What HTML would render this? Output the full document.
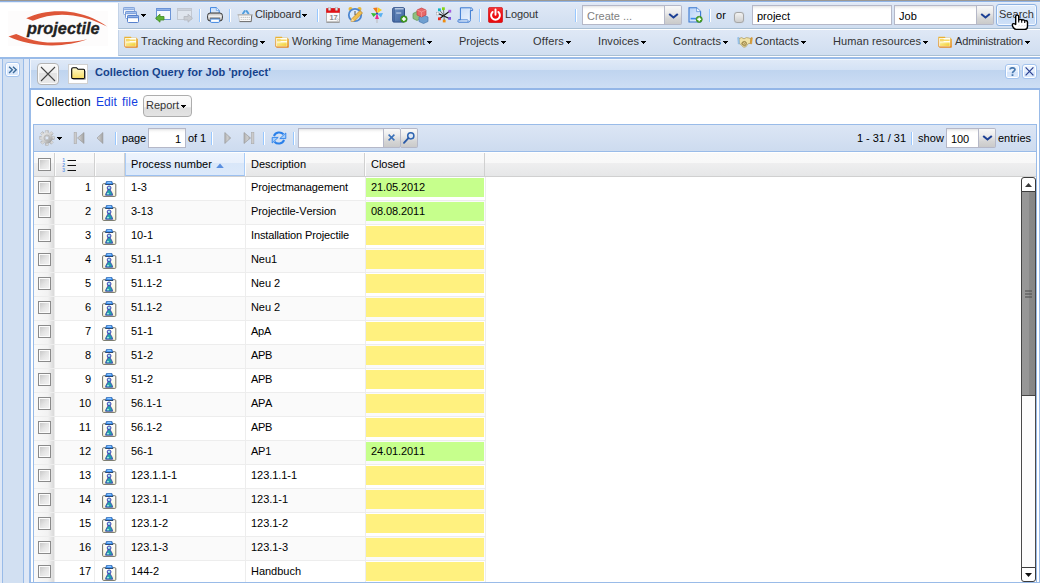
<!DOCTYPE html>
<html><head><meta charset="utf-8">
<style>
*{box-sizing:border-box;margin:0;padding:0}
html,body{width:1040px;height:583px;overflow:hidden;background:#fff}
body{font-kerning:none;font-family:"Liberation Sans",sans-serif;font-size:11px;color:#000;position:relative}
.a{position:absolute}
.t{position:absolute;white-space:nowrap;line-height:14px;height:14px}
.m{color:#333}
.tb{position:absolute;left:118px;width:922px;height:26px;background:linear-gradient(#dfe8f6,#d0def0);border-left:1px solid #c3d3e8;border-bottom:1px solid #a9bfd3}
.sep{position:absolute;width:2px;height:13px;border-left:1px solid #98c8ff;border-right:1px solid #fff;top:9px}
.arr{position:absolute;width:5px;height:1px;background:#000}.arr::before{content:"";position:absolute;left:1px;top:1px;width:3px;height:1px;background:#000}.arr::after{content:"";position:absolute;left:2px;top:2px;width:1px;height:1px;background:#000}
.inp{position:absolute;background:linear-gradient(#e4e4e4 0,#f8f8f8 2px,#fff 4px);border:1px solid #b5b8c8;height:20px}
.trg{position:absolute;width:17px;height:20px;border:1px solid #b5b8c8;border-left:none;border-radius:0 2px 2px 0;background:linear-gradient(#f8f8f8 0%,#ececec 35%,#d4d4d4 70%,#cacaca 100%)}
</style></head><body>
<!-- top chrome -->
<div class="a" style="left:0;top:0;width:1040px;height:1px;background:#9b9893"></div>
<div class="a" style="left:0;top:1px;width:1040px;height:1px;background:#8fb3e6"></div><div class="a" style="left:0;top:2px;width:1040px;height:1px;background:#e4edf9"></div>
<!-- toolbars -->
<div class="tb" id="tb1" style="top:3px"></div>
<div class="tb" id="tb2" style="top:30px"></div>
<div class="a" style="left:0;top:57px;width:1040px;height:2px;background:#99bbe8"></div>

<!-- logo -->
<div class="a" style="left:8px;top:11px;width:100px;height:35px;background:#fdfcfc"></div>
<svg class="a" style="left:0;top:0" width="118" height="57" viewBox="0 0 118 57">
<path d="M26.2 18.2 C40 11.5 58 9.5 74 12.6 C88 15.4 99 20.5 107 26.6 C97 21.5 86 17.6 73 15.6 C59 13.4 45 15.6 32.8 20.7 Z" fill="#de5638"/>
<path d="M16.2 33.9 C27 39 40 42.5 52 42.6 C65 42.7 77 41.5 87.6 39.3 C77 43 64 45.6 51 45.4 C36 45.2 20 42 8.5 36.5 Z" fill="#de5638"/>
</svg>
<div class="t" style="left:27px;top:18.5px;height:20px;line-height:20px;font-size:16px;font-weight:bold;font-style:italic;color:#222;-webkit-text-stroke:0.3px #222;transform:scaleX(1.02);transform-origin:0 0" id="logotxt">projectile</div>

<!-- toolbar row 1 items -->
<div id="r1">
<!-- windows stack -->
<svg class="a" style="left:123px;top:7px" width="17" height="17" viewBox="0 0 17 17">
<rect x="0.5" y="0.5" width="11" height="7" rx="1" fill="#fff" stroke="#86a6dc"/><rect x="0.5" y="0.5" width="11" height="2.2" rx="1" fill="#b0caf0" stroke="#86a6dc"/>
<rect x="2.5" y="4.5" width="11" height="7" rx="1" fill="#fff" stroke="#7498d6"/><rect x="2.5" y="4.5" width="11" height="2.2" rx="1" fill="#a2c0ee" stroke="#7498d6"/>
<rect x="4.5" y="8.5" width="11" height="7" rx="1" fill="#fff" stroke="#5680cc"/><rect x="4.5" y="8.5" width="11" height="2.2" rx="1" fill="#92b4ea" stroke="#5680cc"/>
</svg>
<div class="arr" style="left:141px;top:14px"></div>
<!-- back -->
<svg class="a" style="left:155px;top:7px" width="17" height="17" viewBox="0 0 17 17">
<rect x="1.5" y="1.5" width="14" height="11" fill="#f4f8fe" stroke="#6b93d6"/><rect x="1.5" y="1.5" width="14" height="2" fill="#8fb2ea" stroke="#6b93d6"/>
<path d="M0.5 11.2 L5 7.2 V9.5 H9 V13 H5 V15.2 Z" fill="#5fb336" stroke="#3f8a22" stroke-width="0.8"/>
</svg>
<!-- forward disabled -->
<svg class="a" style="left:176px;top:7px" width="17" height="17" viewBox="0 0 17 17">
<rect x="1.5" y="1.5" width="14" height="11" fill="#dfe5ee" stroke="#c2c8d2"/><rect x="1.5" y="1.5" width="14" height="2" fill="#ccd2dc" stroke="#c2c8d2"/>
<path d="M16.5 11.2 L12 7.2 V9.5 H8 V13 H12 V15.2 Z" fill="#c9ccd2" stroke="#b4b8bf" stroke-width="0.8"/>
</svg>
<div class="sep" style="left:199px"></div>
<!-- printer -->
<svg class="a" style="left:207px;top:7px" width="16" height="16" viewBox="0 0 16 16">
<defs><linearGradient id="prb" x1="0" y1="0" x2="0" y2="1"><stop offset="0" stop-color="#b8b8b8"/><stop offset="0.45" stop-color="#f2f2f2"/><stop offset="1" stop-color="#8c8c8c"/></linearGradient></defs>
<path d="M3.5 0.6 H9.3 L12.2 3.4 V8 H3.5 Z" fill="#d4e5fb" stroke="#3f86e0" stroke-width="1"/>
<path d="M9.3 0.6 V3.4 H12.2" fill="#f4f9ff" stroke="#3f86e0" stroke-width="0.6"/>
<rect x="0.6" y="6" width="14.8" height="8" rx="2.6" fill="url(#prb)" stroke="#3a3a3a" stroke-width="1"/>
<rect x="3" y="10.6" width="10" height="1.2" fill="#666"/>
<rect x="3.6" y="12" width="8.8" height="3.4" rx="0.8" fill="#fff" stroke="#3f86e0" stroke-width="1"/>
</svg>
<div class="sep" style="left:229px"></div>
<!-- basket -->
<svg class="a" style="left:237px;top:9px" width="16" height="14" viewBox="0 0 16 14">
<path d="M6 4.5 L7.7 2.1 M11.4 4.5 L9.7 2.1" stroke="#4f9cdc" stroke-width="1.9" fill="none" stroke-linecap="round"/>
<path d="M1.4 5.8 H15 L14.4 12.6 H2.6 Z" fill="#f8f8f8" stroke="#c4c4c4" stroke-width="0.9"/>
<path d="M14.7 6 L14.2 12.6 H2.6" stroke="#6e6e6e" stroke-width="1" fill="none"/>
<path d="M0.5 5.8 H15.8" stroke="#b4b4b4" stroke-width="1.2"/>
<g fill="#b4b4b4"><circle cx="4.2" cy="8.4" r="0.55"/><circle cx="6.2" cy="8.4" r="0.55"/><circle cx="8.2" cy="8.4" r="0.55"/><circle cx="10.2" cy="8.4" r="0.55"/><circle cx="12.2" cy="8.4" r="0.55"/><circle cx="4.2" cy="10.5" r="0.55"/><circle cx="6.2" cy="10.5" r="0.55"/><circle cx="8.2" cy="10.5" r="0.55"/><circle cx="10.2" cy="10.5" r="0.55"/><circle cx="12.2" cy="10.5" r="0.55"/></g>
</svg>
<div class="t m" style="left:255px;top:7px;letter-spacing:-0.120px">Clipboard</div>
<div class="arr" style="left:302px;top:14px"></div>
<div class="sep" style="left:317px"></div>

<!-- calendar -->
<svg class="a" style="left:326px;top:7px" width="14" height="16" viewBox="0 0 14 16">
<rect x="0.5" y="1.5" width="13" height="13.6" rx="0.8" fill="#fafafa" stroke="#b4b4b4"/>
<path d="M0.3 15.2 H13.7" stroke="#8c8c8c" stroke-width="1"/>
<rect x="0.2" y="1.2" width="13.6" height="4.6" fill="#e21216"/>
<rect x="2.3" y="0.2" width="2.4" height="3.4" rx="0.8" fill="#e4e4e4" stroke="#9a9a9a" stroke-width="0.5"/><rect x="9.3" y="0.2" width="2.4" height="3.4" rx="0.8" fill="#e4e4e4" stroke="#9a9a9a" stroke-width="0.5"/>
<text x="3.4" y="12.6" font-family="Liberation Sans" font-size="7.5" font-weight="bold" fill="#8a8a8a">17</text>
<circle cx="11.6" cy="12.6" r="0.9" fill="#fff" stroke="#aaa" stroke-width="0.5"/>
</svg>
<!-- clock + pencil -->
<svg class="a" style="left:347px;top:6px" width="17" height="17" viewBox="0 0 17 17">
<circle cx="3.5" cy="3" r="2" fill="#e8b838"/><circle cx="12.5" cy="3" r="2" fill="#e8b838"/>
<circle cx="8" cy="9" r="6.2" fill="#dbe9fb" stroke="#4d86d0" stroke-width="1.8"/>
<path d="M8 5 V9 H10.5" stroke="#555" stroke-width="1" fill="none"/>
<path d="M4 15.5 L5 12.5 L13 4.5 L15.5 7 L7.5 15 Z" fill="#f0c050" stroke="#c08020" stroke-width="0.7"/>
<path d="M4 15.5 L5 12.5 L7.5 15 Z" fill="#f6dca8"/>
</svg>
<!-- pinwheel -->
<svg class="a" style="left:370px;top:7px" width="14" height="17" viewBox="0 0 14 17">
<path d="M7 6.5 V16" stroke="#bbb" stroke-width="1"/>
<path d="M7 6.5 L3 1 L7.5 0.5 Z" fill="#f07818"/><path d="M7 6.5 L8 0.5 L12 3 Z" fill="#f8d020"/>
<path d="M7 6.5 L13 6 L11 10.5 Z" fill="#58b0f0"/><path d="M7 6.5 L9 12 L5 12 Z" fill="#f02890"/>
<path d="M7 6.5 L3.5 10 L1 6 Z" fill="#38b838"/>
<circle cx="7" cy="6.5" r="1" fill="#2040c0"/>
</svg>
<!-- book plus -->
<svg class="a" style="left:392px;top:7px" width="16" height="16" viewBox="0 0 16 16">
<defs><linearGradient id="bk" x1="0" y1="0" x2="1" y2="1"><stop offset="0" stop-color="#6f92c4"/><stop offset="1" stop-color="#3f649e"/></linearGradient></defs>
<rect x="0.7" y="0.7" width="11.8" height="14.4" rx="1.2" fill="url(#bk)" stroke="#2f4f88" stroke-width="1"/>
<path d="M2.6 1.8 H11.6" stroke="#dfe9f6" stroke-width="1"/>
<path d="M2.2 1.2 V14.6" stroke="#2f4f88" stroke-width="0.7"/>
<rect x="4.2" y="5.4" width="5" height="1.3" fill="#b4c8e4"/>
<circle cx="11.9" cy="12" r="3.3" fill="#46a224" stroke="#2f7a18" stroke-width="0.6"/>
<path d="M11.9 10 V14 M9.9 12 H13.9" stroke="#fff" stroke-width="1.5"/>
</svg>
<!-- cubes -->
<svg class="a" style="left:412px;top:7px" width="17" height="17" viewBox="0 0 17 17">
<path d="M1 6.5 L5 4.5 L9 6.5 V11.5 L5 13.5 L1 11.5 Z" fill="#8fc080" stroke="#5f9858" stroke-width="0.7"/>
<path d="M7 10 L11.5 8 L16 10 V14.5 L11.5 16.5 L7 14.5 Z" fill="#6f9fd0" stroke="#4878b0" stroke-width="0.7"/>
<path d="M5 3 L9.5 1 L14 3 V8 L9.5 10 L5 8 Z" fill="#e86868" stroke="#c84040" stroke-width="0.7"/>
<path d="M5 3 L9.5 5 L14 3 M9.5 5 V10" stroke="#f4a0a0" stroke-width="0.7" fill="none"/>
</svg>
<!-- network -->
<svg class="a" style="left:436px;top:7px" width="16" height="16" viewBox="0 0 16 16">
<path d="M3.4 11.8 L13.6 4.2 M2.6 6.8 L13.4 11.4" stroke="#111" stroke-width="1.1"/>
<path d="M3.4 3 L8 8.4 M7.4 2 L8 8.4 M8.2 14 L8 8.4" stroke="#444" stroke-width="0.7"/>
<g>
<rect x="2" y="1.4" width="2.8" height="2.8" fill="#10b4c4"/><rect x="6" y="0.3" width="2.8" height="2.8" fill="#84d414"/>
<rect x="12.4" y="2.8" width="2.8" height="2.8" fill="#a45cdc"/><rect x="12.2" y="10" width="2.8" height="2.8" fill="#7c50dc"/>
<rect x="6.8" y="12.6" width="2.8" height="2.8" fill="#f08c10"/><rect x="2" y="10.4" width="2.8" height="2.8" fill="#ec2c1c"/>
</g>
<rect x="0.4" y="5.4" width="2.4" height="2.4" fill="#fff" stroke="#777" stroke-width="0.6" stroke-dasharray="0.8 0.5"/>
</svg>
<!-- scroll -->
<svg class="a" style="left:457px;top:7px" width="17" height="16" viewBox="0 0 17 16">
<defs><linearGradient id="scg" x1="0" y1="0" x2="1" y2="1"><stop offset="0" stop-color="#c4daf8"/><stop offset="1" stop-color="#f0f6fe"/></linearGradient></defs>
<path d="M3.4 0.8 H13.6 C15.4 0.8 15.9 2.2 15.6 3.6 H13.4 V12.6 C13.4 14.4 12.4 15.2 11 15.2 H2 C0.6 15.2 0.4 13.4 1.6 12.8 H3.4 Z" fill="url(#scg)" stroke="#3a78d0" stroke-width="1"/>
<path d="M1.6 12.8 H10.6 C11.2 13.4 11.2 14.4 10.6 15" stroke="#3a78d0" stroke-width="0.8" fill="none"/>
<path d="M13.4 3.6 C14 3 14 1.6 13.4 1" stroke="#3a78d0" stroke-width="0.7" fill="none"/>
</svg>
<div class="sep" style="left:479px"></div>
<!-- logout -->
<svg class="a" style="left:488px;top:7px" width="15" height="16" viewBox="0 0 15 16">
<defs><linearGradient id="lg" x1="0" y1="0" x2="0" y2="1"><stop offset="0" stop-color="#f43838"/><stop offset="0.5" stop-color="#ee0c10"/><stop offset="1" stop-color="#e80c10"/></linearGradient></defs>
<rect x="0.3" y="0.3" width="14.4" height="15.4" rx="2" fill="url(#lg)" stroke="#c40c10" stroke-width="0.6"/>
<path d="M4.6 5 A4.4 4.4 0 1 0 10.4 5" stroke="#fff" stroke-width="2" fill="none" stroke-linecap="round"/>
<path d="M7.5 2.4 V7.8" stroke="#fff" stroke-width="1.9" stroke-linecap="round"/>
</svg>
<div class="t m" style="left:505px;top:7px;letter-spacing:-0.107px">Logout</div>
<div class="sep" style="left:575px"></div>
<!-- create combo -->
<div class="inp" style="left:582px;top:5px;width:83px"></div>
<div class="t" style="left:587px;top:9px;color:#808080;letter-spacing:-0.024px">Create ...</div>
<div class="trg" style="left:665px;top:5px"></div>
<svg class="a" style="left:668px;top:11.5px" width="11" height="8" viewBox="0 0 11 8"><path d="M1.2 1.9 L5.5 5.5 L9.8 1.9" stroke="#1c3f94" stroke-width="2" fill="none"/></svg>
<!-- new doc -->
<svg class="a" style="left:688px;top:7px" width="15" height="16" viewBox="0 0 15 16">
<defs><linearGradient id="ndg" x1="0" y1="0" x2="1" y2="1"><stop offset="0" stop-color="#b4d0f6"/><stop offset="1" stop-color="#e8f1fd"/></linearGradient></defs>
<path d="M1 0.8 H8.6 L12.6 4.6 V15 H1 Z" fill="url(#ndg)" stroke="#3a78d0" stroke-width="1.1"/>
<path d="M8.6 0.8 V4.6 H12.6" fill="#f2f7fe" stroke="#3a78d0" stroke-width="0.6"/>
<path d="M2.6 11.6 H8" stroke="#3a8ae8" stroke-width="1.6"/>
<circle cx="11.2" cy="12.3" r="3.1" fill="#4aa828" stroke="#2f7a18" stroke-width="0.6"/>
<path d="M11.2 10.4 V14.2 M9.3 12.3 H13.1" stroke="#fff" stroke-width="1.4"/>
</svg>
<div class="sep" style="left:709px"></div>
<div class="t" style="left:716px;top:8px;letter-spacing:0.110px">or</div>
<div class="a" style="left:733.5px;top:12.3px;width:10.5px;height:10.5px;border:1px solid #a6a6a6;border-radius:3px;background:linear-gradient(#f2f2f2,#cecece);box-shadow:0 0 1px #b8b8b8"></div>
<div class="inp" style="left:752px;top:5px;width:140px"></div>
<div class="t" style="left:757px;top:9px;letter-spacing:-0.002px">project</div>
<div class="inp" style="left:894px;top:5px;width:83px"></div>
<div class="t" style="left:899px;top:9px;letter-spacing:0.088px">Job</div>
<div class="trg" style="left:977px;top:5px"></div>
<svg class="a" style="left:980px;top:11.5px" width="11" height="8" viewBox="0 0 11 8"><path d="M1.2 1.9 L5.5 5.5 L9.8 1.9" stroke="#1c3f94" stroke-width="2" fill="none"/></svg>
<!-- search button -->
<div class="a" style="left:996px;top:4px;width:41px;height:22px;border:1px solid #8db2e3;border-radius:3px;box-shadow:inset 0 0 0 1px #f4f9ff;background:linear-gradient(#e2edfb 0%,#d8e7fa 58%,#c6dbf6 60%,#cfe0f7 100%)"></div>
<div class="t m" style="left:999px;top:7px;letter-spacing:0.024px">Search</div>
<!-- hand cursor -->
<svg class="a" style="left:1011px;top:14px" width="18" height="17" viewBox="0 0 18 17">
<path d="M4.7 10.4 V2.3 C4.7 0.7 7.7 0.7 7.7 2.3 V6.2 C8.6 5 10.5 5.2 10.7 6.4 C11.6 5.4 13.5 5.8 13.7 7 C14.7 6.2 16.5 6.8 16.5 8.2 V12.4 C16.5 14.4 15.5 15.4 13.5 15.4 H5.2 C3.2 15.4 1.3 12.6 1.3 10.8 C1.3 9.4 3.2 9.2 4.7 10.4 Z" fill="#fff" stroke="#000" stroke-width="1.4" stroke-linejoin="round"/>
<path d="M7.7 6.2 V8.6 M10.7 6.6 V8.8 M13.7 7.2 V9" stroke="#000" stroke-width="1.1"/>
<path d="M7.4 12.4 L8.6 11.2 M10.2 12.4 L11.4 11.2 M13 12.4 L14.2 11.2" stroke="#c8c8c8" stroke-width="0.7"/>
</svg>
</div>

<!-- toolbar row 2 items -->
<div id="r2">
<svg width="0" height="0" style="position:absolute"><defs><linearGradient id="fo" x1="0" y1="0" x2="0" y2="1"><stop offset="0" stop-color="#ebb434"/><stop offset="1" stop-color="#e5861c"/></linearGradient><linearGradient id="fi" x1="0" y1="0" x2="1" y2="1"><stop offset="0" stop-color="#fdf2a8"/><stop offset="1" stop-color="#f0ca24"/></linearGradient><linearGradient id="fg" x1="0" y1="0" x2="0" y2="1"><stop offset="0" stop-color="#fdf3c0"/><stop offset="0.5" stop-color="#fbe388"/><stop offset="1" stop-color="#f4c84a"/></linearGradient></defs></svg>
<svg class="a" style="left:124px;top:36px" width="14" height="12.6" preserveAspectRatio="none" viewBox="0 0 14 12"><path d="M0.3 0.8 H6.9 L7.5 1.7 H12.9 V2.6 H13.8 V10.6 Q13.8 11.3 13.1 11.3 H1.3 V10.3 H0.3 Z" fill="url(#fo)"/><rect x="1.2" y="1.9" width="11" height="8" fill="#fffef2"/><path d="M2 2.7 H5.2 L6 3.3 H11.6 V4.7 H6 L5.2 5.3 H2 Z" fill="#f6d868"/><rect x="1.9" y="6.1" width="9.8" height="3.3" fill="url(#fi)"/></svg>
<svg class="a" style="left:275px;top:36px" width="14" height="12.6" preserveAspectRatio="none" viewBox="0 0 14 12"><path d="M0.3 0.8 H6.9 L7.5 1.7 H12.9 V2.6 H13.8 V10.6 Q13.8 11.3 13.1 11.3 H1.3 V10.3 H0.3 Z" fill="url(#fo)"/><rect x="1.2" y="1.9" width="11" height="8" fill="#fffef2"/><path d="M2 2.7 H5.2 L6 3.3 H11.6 V4.7 H6 L5.2 5.3 H2 Z" fill="#f6d868"/><rect x="1.9" y="6.1" width="9.8" height="3.3" fill="url(#fi)"/></svg>
<svg class="a" style="left:938px;top:36px" width="14" height="12.6" preserveAspectRatio="none" viewBox="0 0 14 12"><path d="M0.3 0.8 H6.9 L7.5 1.7 H12.9 V2.6 H13.8 V10.6 Q13.8 11.3 13.1 11.3 H1.3 V10.3 H0.3 Z" fill="url(#fo)"/><rect x="1.2" y="1.9" width="11" height="8" fill="#fffef2"/><path d="M2 2.7 H5.2 L6 3.3 H11.6 V4.7 H6 L5.2 5.3 H2 Z" fill="#f6d868"/><rect x="1.9" y="6.1" width="9.8" height="3.3" fill="url(#fi)"/></svg>
<div class="t m" style="left:141px;top:34px;letter-spacing:0.010px">Tracking and Recording</div><div class="arr" style="left:260px;top:41px"></div>
<div class="t m" style="left:292px;top:34px;letter-spacing:-0.091px">Working Time Management</div><div class="arr" style="left:427px;top:41px"></div>
<div class="t m" style="left:459px;top:34px;letter-spacing:0.033px">Projects</div><div class="arr" style="left:501px;top:41px"></div>
<div class="t m" style="left:533px;top:34px;letter-spacing:0.175px">Offers</div><div class="arr" style="left:566px;top:41px"></div>
<div class="t m" style="left:598px;top:34px;letter-spacing:0.081px">Invoices</div><div class="arr" style="left:641px;top:41px"></div>
<div class="t m" style="left:673px;top:34px;letter-spacing:0.103px">Contracts</div><div class="arr" style="left:723px;top:41px"></div>
<div class="t m" style="left:755px;top:34px;letter-spacing:0.074px">Contacts</div><div class="arr" style="left:801px;top:41px"></div>
<div class="t m" style="left:833px;top:34px;letter-spacing:0.079px">Human resources</div><div class="arr" style="left:923px;top:41px"></div>
<div class="t m" style="left:955px;top:34px;letter-spacing:-0.121px">Administration</div><div class="arr" style="left:1025px;top:41px"></div>
<svg class="a" style="left:737px;top:36px" width="16" height="13" viewBox="0 0 16 13">
<path d="M2 2.6 L4.6 1.6 L7 2.8 L9.4 1.6 L12 2 L14 2.8 L13.4 7.4 L11.4 7.6 L8.6 11 L6.4 11.2 L3.4 8 L2 7.6 Z" fill="#f0e2a8" stroke="#a08a48" stroke-width="0.6"/>
<path d="M4.6 7.6 C5 5.6 7.6 4.6 9 6 C10 7 9.6 8.8 8.4 9.6 C7.2 10.2 5.6 9.6 4.6 7.6 Z" fill="#b8a060" stroke="#7a6830" stroke-width="0.5"/>
<path d="M6 7 L7.4 8.4 M7.2 6.2 L8.6 7.6" stroke="#f4e8b8" stroke-width="0.6"/>
<path d="M0.6 1.6 L2 1.4 L2.6 7.8 L1.2 8 Z" fill="#9cc8f0" stroke="#7aa8d8" stroke-width="0.4"/>
<path d="M15.4 1.8 L14 1.6 L13.2 7.6 L14.6 8 Z" fill="#e8a838" stroke="#b87818" stroke-width="0.4"/>
</svg>
</div>
<!-- below area bg -->
<div class="a" id="west" style="left:0;top:59px;width:30px;height:524px;background:#dfe8f6">
 <div class="a" style="left:2px;top:0;width:22px;height:524px;background:#d2e0f2;border-left:1px solid #99bbe8;border-right:1px solid #99bbe8"></div>
 <div class="a" style="left:5px;top:3px;width:15px;height:15px;border:1px solid #a4c4ee;border-radius:3px;background:linear-gradient(#eef5fe 0%,#e4effd 50%,#d4e4fb 52%,#dbe9fc 100%);box-shadow:inset 0 0 0 1px #fff"></div>
 <svg class="a" style="left:8px;top:7px" width="10" height="8" viewBox="0 0 10 8"><path d="M1.1 0.7 L4.3 3.8 L1.1 6.9 M5 0.7 L8.2 3.8 L5 6.9" stroke="#3a6a98" stroke-width="1.4" fill="none"/></svg>
</div>
<div class="a" id="main" style="left:29px;top:59px;width:1012px;height:524px;background:#fff;border-left:2px solid #99bbe8;border-right:2px solid #99bbe8"></div>
<!-- panel header -->
<div class="a" id="phead" style="left:30px;top:59px;width:1010px;height:29px;border-left:1px solid #f2f6fc;background:linear-gradient(#f2f7fd 0,#f2f7fd 1px,#dfe9f7 1px,#d4e2f5 11px,#bfd4ef 11px,#cddef4 100%)"></div>
<div class="a" style="left:29px;top:88px;width:1011px;height:2px;background:#93b6e7"></div>
<!-- X button -->
<div class="a" style="left:37px;top:63px;width:22px;height:22px;border:1px solid #b4b4b4;border-radius:4px;box-shadow:inset 0 0 0 1px #fbfbfb;background:linear-gradient(#f8f8f8 0%,#f1f1f1 45%,#e3e3e3 47%,#e8e8e8 100%)"></div>
<svg class="a" style="left:40px;top:66px" width="16" height="16" viewBox="0 0 16 16"><path d="M1 1 L15 15 M15 1 L1 15" stroke="#444" stroke-width="1.1"/></svg>
<!-- folder button -->
<div class="a" style="left:68px;top:64px;width:20px;height:20px;border:1px solid #d0d0d0;background:#fff"></div>
<svg class="a" style="left:71px;top:67px" width="15" height="13" viewBox="0 0 15 13">
<path d="M0.7 2 Q0.7 0.7 2 0.7 H5.5 L7 2.3 H12.5 Q13.6 2.3 13.6 3.5 V10.5 Q13.6 11.6 12.5 11.6 H2 Q0.7 11.6 0.7 10.5 Z" fill="url(#fg2)" stroke="#000" stroke-width="1.1"/>
<path d="M14.3 4 V12.3 H2.5" stroke="#888" stroke-width="0.8" fill="none"/>
<defs><linearGradient id="fg2" x1="0" y1="0" x2="0" y2="1"><stop offset="0" stop-color="#fffbd0"/><stop offset="1" stop-color="#f8dc60"/></linearGradient></defs>
</svg>
<div class="t" style="left:95px;top:65px;font-weight:bold;color:#15428b;letter-spacing:0.079px">Collection Query for Job 'project'</div>
<!-- tools -->
<div class="a" style="left:1005px;top:64px;width:15px;height:15px;border:1px solid #a4c4ee;border-radius:3px;background:linear-gradient(#eef5fe 0%,#e4effd 50%,#d4e4fb 52%,#dbe9fc 100%);box-shadow:inset 0 0 0 1px #fff"></div>
<svg class="a" style="left:1009px;top:67px" width="7" height="9" viewBox="0 0 7 9"><path d="M1 2.6 C1 0.2 6 0.2 6 2.6 C6 4.4 3.5 4.2 3.5 6.2" stroke="#4a7ab0" stroke-width="1.7" fill="none"/><rect x="2.6" y="7.2" width="1.8" height="1.8" fill="#4a7ab0"/></svg>
<div class="a" style="left:1022px;top:64px;width:15px;height:15px;border:1px solid #a4c4ee;border-radius:3px;background:linear-gradient(#eef5fe 0%,#e4effd 50%,#d4e4fb 52%,#dbe9fc 100%);box-shadow:inset 0 0 0 1px #fff"></div>
<svg class="a" style="left:1025px;top:67px" width="9" height="9" viewBox="0 0 9 9"><path d="M0.6 0.4 L8.4 8.4 M8.4 0.4 L0.6 8.4" stroke="#2a3f90" stroke-width="1.2"/></svg>
<!-- body line -->
<div class="t" style="left:36px;top:94px;font-size:12px;height:16px;line-height:16px;letter-spacing:0.231px">Collection</div>
<div class="t" style="left:96px;top:94px;font-size:12px;height:16px;line-height:16px;color:#1240e0;letter-spacing:0.081px">Edit</div><div class="t" style="left:122px;top:94px;font-size:12px;height:16px;line-height:16px;color:#1240e0;letter-spacing:0.165px">file</div>
<div class="a" style="left:143px;top:95px;width:49px;height:22px;border:1px solid #adadad;border-radius:4px;background:linear-gradient(#fbfbfb 0%,#f4f4f4 56%,#dedede 58%,#e3e3e3 100%)"></div>
<div class="t m" style="left:146px;top:98px;letter-spacing:-0.003px">Report</div>
<div class="arr" style="left:181px;top:105px"></div>
<!-- grid toolbar -->
<div class="a" id="gtb" style="left:33px;top:124px;width:1004px;height:28px;border:1px solid #99bbe8;background:linear-gradient(#dce6f5,#cddbef)"></div>

<!-- grid toolbar items -->
<svg width="0" height="0" style="position:absolute"><defs><linearGradient id="pg2" x1="0" y1="0" x2="1" y2="0"><stop offset="0" stop-color="#b0b0b0"/><stop offset="0.5" stop-color="#cecece"/><stop offset="1" stop-color="#a8a8a8"/></linearGradient><linearGradient id="pg" x1="0" y1="0" x2="1" y2="0"><stop offset="0" stop-color="#dadada"/><stop offset="1" stop-color="#a2a2a2"/></linearGradient></defs></svg>
<svg class="a" style="left:39px;top:130px" width="16" height="16" viewBox="0 0 16 16">
<defs><linearGradient id="gg" x1="0" y1="0" x2="1" y2="1"><stop offset="0" stop-color="#eeeeee"/><stop offset="0.55" stop-color="#cccccc"/><stop offset="1" stop-color="#8a8a8a"/></linearGradient></defs>
<g fill="url(#gg)" stroke="#a2a2a2" stroke-width="0.45"><rect x="6.4" y="0.3" width="3" height="4" rx="0.5" transform="rotate(0 7.9 7.9)"/><rect x="6.4" y="0.3" width="3" height="4" rx="0.5" transform="rotate(45 7.9 7.9)"/><rect x="6.4" y="0.3" width="3" height="4" rx="0.5" transform="rotate(90 7.9 7.9)"/><rect x="6.4" y="0.3" width="3" height="4" rx="0.5" transform="rotate(135 7.9 7.9)"/><rect x="6.4" y="0.3" width="3" height="4" rx="0.5" transform="rotate(180 7.9 7.9)"/><rect x="6.4" y="0.3" width="3" height="4" rx="0.5" transform="rotate(225 7.9 7.9)"/><rect x="6.4" y="0.3" width="3" height="4" rx="0.5" transform="rotate(270 7.9 7.9)"/><rect x="6.4" y="0.3" width="3" height="4" rx="0.5" transform="rotate(315 7.9 7.9)"/></g>
<circle cx="7.9" cy="7.9" r="5.6" fill="url(#gg)"/>
<circle cx="7.9" cy="7.9" r="2.9" fill="none" stroke="#b4b4b4" stroke-width="0.8"/>
<circle cx="7.9" cy="7.9" r="1.9" fill="#dfe8f6" stroke="#a8a8a8" stroke-width="0.5"/>
</svg>
<div class="arr" style="left:57px;top:137px"></div>
<!-- first -->
<svg class="a" style="left:73px;top:132px" width="12" height="12" viewBox="0 0 12 12">
<rect x="1.1" y="0.2" width="2.6" height="11.6" fill="#cbcbcb" stroke="#a4a4a4" stroke-width="0.5"/>
<path d="M11 0.5 V11.5 L4.5 6 Z" fill="url(#pg)" stroke="#969696" stroke-width="0.6"/></svg>
<!-- prev -->
<svg class="a" style="left:96px;top:132px" width="8" height="12" viewBox="0 0 8 12"><path d="M6.9 0.5 V11.5 L1 6 Z" fill="url(#pg)" stroke="#969696" stroke-width="0.6"/></svg>
<div class="sep" style="left:115px;top:132px"></div>

<div class="t" style="left:122px;top:131px;letter-spacing:-0.118px">page</div>
<div class="inp" style="left:148px;top:128px;width:38px"></div>
<div class="t" style="left:150px;top:132px;width:31px;text-align:right;letter-spacing:-0.118px">1</div>
<div class="t" style="left:188px;top:131px;letter-spacing:-0.087px">of 1</div>
<div class="sep" style="left:211px;top:132px"></div>

<!-- next -->
<svg class="a" style="left:223.5px;top:132px" width="8" height="12" viewBox="0 0 8 12"><path d="M0.8 0.5 V11.5 L6.7 6 Z" fill="url(#pg2)" stroke="#969696" stroke-width="0.6"/></svg>
<!-- last -->
<svg class="a" style="left:243px;top:132px" width="12" height="12" viewBox="0 0 12 12">
<path d="M1 0.5 V11.5 L7.5 6 Z" fill="url(#pg2)" stroke="#969696" stroke-width="0.6"/>
<rect x="8.3" y="0.2" width="2.6" height="11.6" fill="#cbcbcb" stroke="#a4a4a4" stroke-width="0.5"/></svg>
<div class="sep" style="left:263px;top:132px"></div>

<!-- refresh -->
<svg class="a" style="left:271px;top:130px" width="16" height="16" viewBox="0 0 16 16">
<path d="M2.9 6 A5.8 5.8 0 0 1 12.5 4.3" stroke="#2a80ea" stroke-width="2" fill="none"/>
<path d="M13.1 10 A5.8 5.8 0 0 1 3.5 11.7" stroke="#2a80ea" stroke-width="2" fill="none"/>
<path d="M14.8 3 V8.6 H8.8 Z" fill="#a4cdfb" stroke="#2a80ea" stroke-width="0.9" stroke-linejoin="round"/>
<path d="M1.2 13 V7.4 H7.2 Z" fill="#a4cdfb" stroke="#2a80ea" stroke-width="0.9" stroke-linejoin="round"/>
</svg>
<div class="sep" style="left:293px;top:132px"></div>

<div class="inp" style="left:298px;top:128px;width:86px"></div>
<div class="trg" style="left:383px;top:128px;width:18px;border-left:1px solid #b5b8c8"></div>
<svg class="a" style="left:388px;top:134px" width="7" height="7" viewBox="0 0 7 7"><path d="M0.6 0.6 L6.4 6.4 M6.4 0.6 L0.6 6.4" stroke="#3a70b8" stroke-width="1.5"/></svg>
<div class="trg" style="left:401px;top:128px"></div>
<svg class="a" style="left:402px;top:131px" width="14" height="14" viewBox="0 0 14 14"><circle cx="8.8" cy="4.8" r="3.1" fill="#dfe8f4" stroke="#2e64b0" stroke-width="1.5"/><path d="M6.4 7.2 L2 11.8" stroke="#2a5aa8" stroke-width="1.9" stroke-linecap="round"/></svg>
<!-- right side -->
<div class="t" style="left:857px;top:131px;letter-spacing:-0.048px">1 - 31 / 31</div>
<div class="sep" style="left:911px;top:132px"></div>

<div class="t" style="left:918px;top:131px;letter-spacing:0.080px">show</div>
<div class="inp" style="left:946px;top:128px;width:33px"></div>
<div class="t" style="left:951px;top:132px;letter-spacing:-0.118px">100</div>
<div class="trg" style="left:979px;top:128px"></div>
<svg class="a" style="left:982px;top:134px" width="11" height="8" viewBox="0 0 11 8"><path d="M1.2 1.9 L5.5 5.5 L9.8 1.9" stroke="#1c3f94" stroke-width="2" fill="none"/></svg>
<div class="t" style="left:998px;top:131px;letter-spacing:-0.002px">entries</div>

<style>
.hd{position:absolute;top:153px;height:23px;border-right:1px solid #d0d0d0;border-left:1px solid #fdfdfd}
.cb{position:absolute;left:38px;width:13px;height:13px;border:1px solid #8a8a8a;background:linear-gradient(135deg,#c2c2c2 0%,#e4e4e4 50%,#f6f6f6 100%);box-shadow:inset 0 0 0 1px #fbfbfb}
.row{position:absolute;left:34px;width:452px;height:24px;border-bottom:1px solid #ededed}
.alt{background:#fafafa}
.ck{position:absolute;left:0;top:0;width:20px;height:23px;background:linear-gradient(90deg,#fafafa 0%,#f2f2f2 70%,#d9d9d9 100%)}
.vs{position:absolute;top:0;width:1px;height:23px;background:#ededed}
.c{position:absolute;top:3px;white-space:nowrap;line-height:14px;height:14px}
.col{position:absolute;left:332px;top:1px;width:118px;height:19px}
</style>

<svg width="0" height="0" style="position:absolute"><defs><linearGradient id="cbg" x1="0" y1="0" x2="0" y2="1"><stop offset="0" stop-color="#ffffff"/><stop offset="1" stop-color="#f6f5d4"/></linearGradient></defs></svg>
<!-- grid header -->
<div class="a" style="left:34px;top:152px;width:1002px;height:25px;background:linear-gradient(#ffffff 0,#ffffff 1px,#f9f9f9 1px,#f8f8f8 46%,#eeeeef 48%,#e6e7e8 100%);border-bottom:1px solid #d0d0d0"></div>
<div class="hd" style="left:34px;width:21px;border-left:none"></div>
<div class="hd" style="left:55px;width:40px"></div>
<div class="hd" style="left:95px;width:30px"></div>
<div class="a" style="left:125px;top:153px;width:120px;height:23px;background:linear-gradient(#edf4fd 0%,#e8f0fc 45%,#d9e7f9 47%,#dce9fa 100%);border-left:1px solid #aaccf6;border-right:1px solid #aaccf6;border-bottom:1px solid #9cc0f0"></div>
<div class="hd" style="left:245px;width:120px"></div>
<div class="hd" style="left:365px;width:120px"></div>
<div class="cb" style="top:158px"></div>
<svg class="a" style="left:62px;top:158px" width="15" height="14" viewBox="0 0 15 14">
<path d="M5.5 2.5 H14 M5.5 7.5 H14 M5.5 12.5 H14" stroke="#111" stroke-width="1"/>
<text x="0.2" y="4.4" font-family="Liberation Sans" font-size="5" font-weight="bold" fill="#6a9be8">1</text>
<text x="0.2" y="9.4" font-family="Liberation Sans" font-size="5" font-weight="bold" fill="#6a9be8">2</text>
<text x="0.2" y="14.4" font-family="Liberation Sans" font-size="5" font-weight="bold" fill="#6a9be8">3</text>
</svg>
<div class="t" style="left:131px;top:157px;letter-spacing:0.065px">Process number</div>
<svg class="a" style="left:215.5px;top:163px" width="8" height="5" viewBox="0 0 8 5"><path d="M0.2 5 L4 0.6 L7.8 5 Z" fill="#5a8fe0"/></svg>
<div class="t" style="left:251px;top:157px;letter-spacing:-0.002px">Description</div>
<div class="t" style="left:371px;top:157px;letter-spacing:-0.040px">Closed</div>
<!-- rows -->
<div class="row" style="top:177px"><div class="ck"></div><div class="cb" style="left:4px;top:4px"></div><div class="vs" style="left:20px"></div><div class="vs" style="left:60px"></div><div class="vs" style="left:90px"></div><div class="vs" style="left:211px"></div><div class="vs" style="left:331px"></div><div class="vs" style="left:451px"></div><div class="c" style="left:22px;width:35px;text-align:right;letter-spacing:-0.118px">1</div><svg class="a" style="left:68px;top:4px" width="15" height="16" viewBox="0 0 15 16"><rect x="0.6" y="2.7" width="13.2" height="12.7" rx="1" fill="url(#cbg)" stroke="#707064" stroke-width="1"/><path d="M4.5 0.3 H9.9 L11 3.5 H3.4 Z" fill="#3f8ff0" stroke="#234f88" stroke-width="0.5"/><rect x="5.3" y="1" width="3.8" height="1.1" fill="#8cc8ff"/><path d="M3.4 3.5 H11" stroke="#16304f" stroke-width="0.7"/><path d="M5.9 8.4 C5.9 10.2 3.6 11.6 3.6 14.2 H10.6 C10.6 11.6 8.3 10.2 8.3 8.4 Z" fill="#22a4a8" stroke="#3a34b0" stroke-width="0.8"/><ellipse cx="6" cy="12.6" rx="1.2" ry="0.9" fill="#b8f0e8" opacity="0.8"/><circle cx="7.1" cy="6.9" r="1.9" fill="#7fd0e0" stroke="#3a34b0" stroke-width="0.9"/><circle cx="6.9" cy="6.6" r="0.7" fill="#e8ffff"/></svg><div class="c" style="left:97px;letter-spacing:0.034px">1-3</div><div class="c" style="left:217px;letter-spacing:-0.085px">Projectmanagement</div><div class="col" style="background:#c6ff8c"></div><div class="c" style="left:337px;letter-spacing:-0.105px">21.05.2012</div></div>
<div class="row alt" style="top:201px"><div class="ck"></div><div class="cb" style="left:4px;top:4px"></div><div class="vs" style="left:20px"></div><div class="vs" style="left:60px"></div><div class="vs" style="left:90px"></div><div class="vs" style="left:211px"></div><div class="vs" style="left:331px"></div><div class="vs" style="left:451px"></div><div class="c" style="left:22px;width:35px;text-align:right;letter-spacing:-0.118px">2</div><svg class="a" style="left:68px;top:4px" width="15" height="16" viewBox="0 0 15 16"><rect x="0.6" y="2.7" width="13.2" height="12.7" rx="1" fill="url(#cbg)" stroke="#707064" stroke-width="1"/><path d="M4.5 0.3 H9.9 L11 3.5 H3.4 Z" fill="#3f8ff0" stroke="#234f88" stroke-width="0.5"/><rect x="5.3" y="1" width="3.8" height="1.1" fill="#8cc8ff"/><path d="M3.4 3.5 H11" stroke="#16304f" stroke-width="0.7"/><path d="M5.9 8.4 C5.9 10.2 3.6 11.6 3.6 14.2 H10.6 C10.6 11.6 8.3 10.2 8.3 8.4 Z" fill="#22a4a8" stroke="#3a34b0" stroke-width="0.8"/><ellipse cx="6" cy="12.6" rx="1.2" ry="0.9" fill="#b8f0e8" opacity="0.8"/><circle cx="7.1" cy="6.9" r="1.9" fill="#7fd0e0" stroke="#3a34b0" stroke-width="0.9"/><circle cx="6.9" cy="6.6" r="0.7" fill="#e8ffff"/></svg><div class="c" style="left:97px;letter-spacing:-0.004px">3-13</div><div class="c" style="left:217px;letter-spacing:-0.067px">Projectile-Version</div><div class="col" style="background:#c6ff8c"></div><div class="c" style="left:337px;letter-spacing:-0.105px">08.08.2011</div></div>
<div class="row" style="top:225px"><div class="ck"></div><div class="cb" style="left:4px;top:4px"></div><div class="vs" style="left:20px"></div><div class="vs" style="left:60px"></div><div class="vs" style="left:90px"></div><div class="vs" style="left:211px"></div><div class="vs" style="left:331px"></div><div class="vs" style="left:451px"></div><div class="c" style="left:22px;width:35px;text-align:right;letter-spacing:-0.118px">3</div><svg class="a" style="left:68px;top:4px" width="15" height="16" viewBox="0 0 15 16"><rect x="0.6" y="2.7" width="13.2" height="12.7" rx="1" fill="url(#cbg)" stroke="#707064" stroke-width="1"/><path d="M4.5 0.3 H9.9 L11 3.5 H3.4 Z" fill="#3f8ff0" stroke="#234f88" stroke-width="0.5"/><rect x="5.3" y="1" width="3.8" height="1.1" fill="#8cc8ff"/><path d="M3.4 3.5 H11" stroke="#16304f" stroke-width="0.7"/><path d="M5.9 8.4 C5.9 10.2 3.6 11.6 3.6 14.2 H10.6 C10.6 11.6 8.3 10.2 8.3 8.4 Z" fill="#22a4a8" stroke="#3a34b0" stroke-width="0.8"/><ellipse cx="6" cy="12.6" rx="1.2" ry="0.9" fill="#b8f0e8" opacity="0.8"/><circle cx="7.1" cy="6.9" r="1.9" fill="#7fd0e0" stroke="#3a34b0" stroke-width="0.9"/><circle cx="6.9" cy="6.6" r="0.7" fill="#e8ffff"/></svg><div class="c" style="left:97px;letter-spacing:-0.004px">10-1</div><div class="c" style="left:217px;letter-spacing:-0.125px">Installation Projectile</div><div class="col" style="background:#fff17f"></div><div class="c" style="left:337px"></div></div>
<div class="row alt" style="top:249px"><div class="ck"></div><div class="cb" style="left:4px;top:4px"></div><div class="vs" style="left:20px"></div><div class="vs" style="left:60px"></div><div class="vs" style="left:90px"></div><div class="vs" style="left:211px"></div><div class="vs" style="left:331px"></div><div class="vs" style="left:451px"></div><div class="c" style="left:22px;width:35px;text-align:right;letter-spacing:-0.118px">4</div><svg class="a" style="left:68px;top:4px" width="15" height="16" viewBox="0 0 15 16"><rect x="0.6" y="2.7" width="13.2" height="12.7" rx="1" fill="url(#cbg)" stroke="#707064" stroke-width="1"/><path d="M4.5 0.3 H9.9 L11 3.5 H3.4 Z" fill="#3f8ff0" stroke="#234f88" stroke-width="0.5"/><rect x="5.3" y="1" width="3.8" height="1.1" fill="#8cc8ff"/><path d="M3.4 3.5 H11" stroke="#16304f" stroke-width="0.7"/><path d="M5.9 8.4 C5.9 10.2 3.6 11.6 3.6 14.2 H10.6 C10.6 11.6 8.3 10.2 8.3 8.4 Z" fill="#22a4a8" stroke="#3a34b0" stroke-width="0.8"/><ellipse cx="6" cy="12.6" rx="1.2" ry="0.9" fill="#b8f0e8" opacity="0.8"/><circle cx="7.1" cy="6.9" r="1.9" fill="#7fd0e0" stroke="#3a34b0" stroke-width="0.9"/><circle cx="6.9" cy="6.6" r="0.7" fill="#e8ffff"/></svg><div class="c" style="left:97px;letter-spacing:-0.032px">51.1-1</div><div class="c" style="left:217px;letter-spacing:-0.074px">Neu1</div><div class="col" style="background:#fff17f"></div><div class="c" style="left:337px"></div></div>
<div class="row" style="top:273px"><div class="ck"></div><div class="cb" style="left:4px;top:4px"></div><div class="vs" style="left:20px"></div><div class="vs" style="left:60px"></div><div class="vs" style="left:90px"></div><div class="vs" style="left:211px"></div><div class="vs" style="left:331px"></div><div class="vs" style="left:451px"></div><div class="c" style="left:22px;width:35px;text-align:right;letter-spacing:-0.118px">5</div><svg class="a" style="left:68px;top:4px" width="15" height="16" viewBox="0 0 15 16"><rect x="0.6" y="2.7" width="13.2" height="12.7" rx="1" fill="url(#cbg)" stroke="#707064" stroke-width="1"/><path d="M4.5 0.3 H9.9 L11 3.5 H3.4 Z" fill="#3f8ff0" stroke="#234f88" stroke-width="0.5"/><rect x="5.3" y="1" width="3.8" height="1.1" fill="#8cc8ff"/><path d="M3.4 3.5 H11" stroke="#16304f" stroke-width="0.7"/><path d="M5.9 8.4 C5.9 10.2 3.6 11.6 3.6 14.2 H10.6 C10.6 11.6 8.3 10.2 8.3 8.4 Z" fill="#22a4a8" stroke="#3a34b0" stroke-width="0.8"/><ellipse cx="6" cy="12.6" rx="1.2" ry="0.9" fill="#b8f0e8" opacity="0.8"/><circle cx="7.1" cy="6.9" r="1.9" fill="#7fd0e0" stroke="#3a34b0" stroke-width="0.9"/><circle cx="6.9" cy="6.6" r="0.7" fill="#e8ffff"/></svg><div class="c" style="left:97px;letter-spacing:-0.032px">51.1-2</div><div class="c" style="left:217px;letter-spacing:-0.071px">Neu 2</div><div class="col" style="background:#fff17f"></div><div class="c" style="left:337px"></div></div>
<div class="row alt" style="top:297px"><div class="ck"></div><div class="cb" style="left:4px;top:4px"></div><div class="vs" style="left:20px"></div><div class="vs" style="left:60px"></div><div class="vs" style="left:90px"></div><div class="vs" style="left:211px"></div><div class="vs" style="left:331px"></div><div class="vs" style="left:451px"></div><div class="c" style="left:22px;width:35px;text-align:right;letter-spacing:-0.118px">6</div><svg class="a" style="left:68px;top:4px" width="15" height="16" viewBox="0 0 15 16"><rect x="0.6" y="2.7" width="13.2" height="12.7" rx="1" fill="url(#cbg)" stroke="#707064" stroke-width="1"/><path d="M4.5 0.3 H9.9 L11 3.5 H3.4 Z" fill="#3f8ff0" stroke="#234f88" stroke-width="0.5"/><rect x="5.3" y="1" width="3.8" height="1.1" fill="#8cc8ff"/><path d="M3.4 3.5 H11" stroke="#16304f" stroke-width="0.7"/><path d="M5.9 8.4 C5.9 10.2 3.6 11.6 3.6 14.2 H10.6 C10.6 11.6 8.3 10.2 8.3 8.4 Z" fill="#22a4a8" stroke="#3a34b0" stroke-width="0.8"/><ellipse cx="6" cy="12.6" rx="1.2" ry="0.9" fill="#b8f0e8" opacity="0.8"/><circle cx="7.1" cy="6.9" r="1.9" fill="#7fd0e0" stroke="#3a34b0" stroke-width="0.9"/><circle cx="6.9" cy="6.6" r="0.7" fill="#e8ffff"/></svg><div class="c" style="left:97px;letter-spacing:-0.032px">51.1-2</div><div class="c" style="left:217px;letter-spacing:-0.071px">Neu 2</div><div class="col" style="background:#fff17f"></div><div class="c" style="left:337px"></div></div>
<div class="row" style="top:321px"><div class="ck"></div><div class="cb" style="left:4px;top:4px"></div><div class="vs" style="left:20px"></div><div class="vs" style="left:60px"></div><div class="vs" style="left:90px"></div><div class="vs" style="left:211px"></div><div class="vs" style="left:331px"></div><div class="vs" style="left:451px"></div><div class="c" style="left:22px;width:35px;text-align:right;letter-spacing:-0.118px">7</div><svg class="a" style="left:68px;top:4px" width="15" height="16" viewBox="0 0 15 16"><rect x="0.6" y="2.7" width="13.2" height="12.7" rx="1" fill="url(#cbg)" stroke="#707064" stroke-width="1"/><path d="M4.5 0.3 H9.9 L11 3.5 H3.4 Z" fill="#3f8ff0" stroke="#234f88" stroke-width="0.5"/><rect x="5.3" y="1" width="3.8" height="1.1" fill="#8cc8ff"/><path d="M3.4 3.5 H11" stroke="#16304f" stroke-width="0.7"/><path d="M5.9 8.4 C5.9 10.2 3.6 11.6 3.6 14.2 H10.6 C10.6 11.6 8.3 10.2 8.3 8.4 Z" fill="#22a4a8" stroke="#3a34b0" stroke-width="0.8"/><ellipse cx="6" cy="12.6" rx="1.2" ry="0.9" fill="#b8f0e8" opacity="0.8"/><circle cx="7.1" cy="6.9" r="1.9" fill="#7fd0e0" stroke="#3a34b0" stroke-width="0.9"/><circle cx="6.9" cy="6.6" r="0.7" fill="#e8ffff"/></svg><div class="c" style="left:97px;letter-spacing:-0.004px">51-1</div><div class="c" style="left:217px;letter-spacing:-0.264px">ApA</div><div class="col" style="background:#fff17f"></div><div class="c" style="left:337px"></div></div>
<div class="row alt" style="top:345px"><div class="ck"></div><div class="cb" style="left:4px;top:4px"></div><div class="vs" style="left:20px"></div><div class="vs" style="left:60px"></div><div class="vs" style="left:90px"></div><div class="vs" style="left:211px"></div><div class="vs" style="left:331px"></div><div class="vs" style="left:451px"></div><div class="c" style="left:22px;width:35px;text-align:right;letter-spacing:-0.118px">8</div><svg class="a" style="left:68px;top:4px" width="15" height="16" viewBox="0 0 15 16"><rect x="0.6" y="2.7" width="13.2" height="12.7" rx="1" fill="url(#cbg)" stroke="#707064" stroke-width="1"/><path d="M4.5 0.3 H9.9 L11 3.5 H3.4 Z" fill="#3f8ff0" stroke="#234f88" stroke-width="0.5"/><rect x="5.3" y="1" width="3.8" height="1.1" fill="#8cc8ff"/><path d="M3.4 3.5 H11" stroke="#16304f" stroke-width="0.7"/><path d="M5.9 8.4 C5.9 10.2 3.6 11.6 3.6 14.2 H10.6 C10.6 11.6 8.3 10.2 8.3 8.4 Z" fill="#22a4a8" stroke="#3a34b0" stroke-width="0.8"/><ellipse cx="6" cy="12.6" rx="1.2" ry="0.9" fill="#b8f0e8" opacity="0.8"/><circle cx="7.1" cy="6.9" r="1.9" fill="#7fd0e0" stroke="#3a34b0" stroke-width="0.9"/><circle cx="6.9" cy="6.6" r="0.7" fill="#e8ffff"/></svg><div class="c" style="left:97px;letter-spacing:-0.004px">51-2</div><div class="c" style="left:217px;letter-spacing:-0.337px">APB</div><div class="col" style="background:#fff17f"></div><div class="c" style="left:337px"></div></div>
<div class="row" style="top:369px"><div class="ck"></div><div class="cb" style="left:4px;top:4px"></div><div class="vs" style="left:20px"></div><div class="vs" style="left:60px"></div><div class="vs" style="left:90px"></div><div class="vs" style="left:211px"></div><div class="vs" style="left:331px"></div><div class="vs" style="left:451px"></div><div class="c" style="left:22px;width:35px;text-align:right;letter-spacing:-0.118px">9</div><svg class="a" style="left:68px;top:4px" width="15" height="16" viewBox="0 0 15 16"><rect x="0.6" y="2.7" width="13.2" height="12.7" rx="1" fill="url(#cbg)" stroke="#707064" stroke-width="1"/><path d="M4.5 0.3 H9.9 L11 3.5 H3.4 Z" fill="#3f8ff0" stroke="#234f88" stroke-width="0.5"/><rect x="5.3" y="1" width="3.8" height="1.1" fill="#8cc8ff"/><path d="M3.4 3.5 H11" stroke="#16304f" stroke-width="0.7"/><path d="M5.9 8.4 C5.9 10.2 3.6 11.6 3.6 14.2 H10.6 C10.6 11.6 8.3 10.2 8.3 8.4 Z" fill="#22a4a8" stroke="#3a34b0" stroke-width="0.8"/><ellipse cx="6" cy="12.6" rx="1.2" ry="0.9" fill="#b8f0e8" opacity="0.8"/><circle cx="7.1" cy="6.9" r="1.9" fill="#7fd0e0" stroke="#3a34b0" stroke-width="0.9"/><circle cx="6.9" cy="6.6" r="0.7" fill="#e8ffff"/></svg><div class="c" style="left:97px;letter-spacing:-0.004px">51-2</div><div class="c" style="left:217px;letter-spacing:-0.337px">APB</div><div class="col" style="background:#fff17f"></div><div class="c" style="left:337px"></div></div>
<div class="row alt" style="top:393px"><div class="ck"></div><div class="cb" style="left:4px;top:4px"></div><div class="vs" style="left:20px"></div><div class="vs" style="left:60px"></div><div class="vs" style="left:90px"></div><div class="vs" style="left:211px"></div><div class="vs" style="left:331px"></div><div class="vs" style="left:451px"></div><div class="c" style="left:22px;width:35px;text-align:right;letter-spacing:-0.118px">10</div><svg class="a" style="left:68px;top:4px" width="15" height="16" viewBox="0 0 15 16"><rect x="0.6" y="2.7" width="13.2" height="12.7" rx="1" fill="url(#cbg)" stroke="#707064" stroke-width="1"/><path d="M4.5 0.3 H9.9 L11 3.5 H3.4 Z" fill="#3f8ff0" stroke="#234f88" stroke-width="0.5"/><rect x="5.3" y="1" width="3.8" height="1.1" fill="#8cc8ff"/><path d="M3.4 3.5 H11" stroke="#16304f" stroke-width="0.7"/><path d="M5.9 8.4 C5.9 10.2 3.6 11.6 3.6 14.2 H10.6 C10.6 11.6 8.3 10.2 8.3 8.4 Z" fill="#22a4a8" stroke="#3a34b0" stroke-width="0.8"/><ellipse cx="6" cy="12.6" rx="1.2" ry="0.9" fill="#b8f0e8" opacity="0.8"/><circle cx="7.1" cy="6.9" r="1.9" fill="#7fd0e0" stroke="#3a34b0" stroke-width="0.9"/><circle cx="6.9" cy="6.6" r="0.7" fill="#e8ffff"/></svg><div class="c" style="left:97px;letter-spacing:-0.032px">56.1-1</div><div class="c" style="left:217px;letter-spacing:-0.337px">APA</div><div class="col" style="background:#fff17f"></div><div class="c" style="left:337px"></div></div>
<div class="row" style="top:417px"><div class="ck"></div><div class="cb" style="left:4px;top:4px"></div><div class="vs" style="left:20px"></div><div class="vs" style="left:60px"></div><div class="vs" style="left:90px"></div><div class="vs" style="left:211px"></div><div class="vs" style="left:331px"></div><div class="vs" style="left:451px"></div><div class="c" style="left:22px;width:35px;text-align:right;letter-spacing:-0.118px">11</div><svg class="a" style="left:68px;top:4px" width="15" height="16" viewBox="0 0 15 16"><rect x="0.6" y="2.7" width="13.2" height="12.7" rx="1" fill="url(#cbg)" stroke="#707064" stroke-width="1"/><path d="M4.5 0.3 H9.9 L11 3.5 H3.4 Z" fill="#3f8ff0" stroke="#234f88" stroke-width="0.5"/><rect x="5.3" y="1" width="3.8" height="1.1" fill="#8cc8ff"/><path d="M3.4 3.5 H11" stroke="#16304f" stroke-width="0.7"/><path d="M5.9 8.4 C5.9 10.2 3.6 11.6 3.6 14.2 H10.6 C10.6 11.6 8.3 10.2 8.3 8.4 Z" fill="#22a4a8" stroke="#3a34b0" stroke-width="0.8"/><ellipse cx="6" cy="12.6" rx="1.2" ry="0.9" fill="#b8f0e8" opacity="0.8"/><circle cx="7.1" cy="6.9" r="1.9" fill="#7fd0e0" stroke="#3a34b0" stroke-width="0.9"/><circle cx="6.9" cy="6.6" r="0.7" fill="#e8ffff"/></svg><div class="c" style="left:97px;letter-spacing:-0.032px">56.1-2</div><div class="c" style="left:217px;letter-spacing:-0.337px">APB</div><div class="col" style="background:#fff17f"></div><div class="c" style="left:337px"></div></div>
<div class="row alt" style="top:441px"><div class="ck"></div><div class="cb" style="left:4px;top:4px"></div><div class="vs" style="left:20px"></div><div class="vs" style="left:60px"></div><div class="vs" style="left:90px"></div><div class="vs" style="left:211px"></div><div class="vs" style="left:331px"></div><div class="vs" style="left:451px"></div><div class="c" style="left:22px;width:35px;text-align:right;letter-spacing:-0.118px">12</div><svg class="a" style="left:68px;top:4px" width="15" height="16" viewBox="0 0 15 16"><rect x="0.6" y="2.7" width="13.2" height="12.7" rx="1" fill="url(#cbg)" stroke="#707064" stroke-width="1"/><path d="M4.5 0.3 H9.9 L11 3.5 H3.4 Z" fill="#3f8ff0" stroke="#234f88" stroke-width="0.5"/><rect x="5.3" y="1" width="3.8" height="1.1" fill="#8cc8ff"/><path d="M3.4 3.5 H11" stroke="#16304f" stroke-width="0.7"/><path d="M5.9 8.4 C5.9 10.2 3.6 11.6 3.6 14.2 H10.6 C10.6 11.6 8.3 10.2 8.3 8.4 Z" fill="#22a4a8" stroke="#3a34b0" stroke-width="0.8"/><ellipse cx="6" cy="12.6" rx="1.2" ry="0.9" fill="#b8f0e8" opacity="0.8"/><circle cx="7.1" cy="6.9" r="1.9" fill="#7fd0e0" stroke="#3a34b0" stroke-width="0.9"/><circle cx="6.9" cy="6.6" r="0.7" fill="#e8ffff"/></svg><div class="c" style="left:97px;letter-spacing:-0.004px">56-1</div><div class="c" style="left:217px;letter-spacing:-0.264px">AP1</div><div class="col" style="background:#c6ff8c"></div><div class="c" style="left:337px;letter-spacing:-0.105px">24.01.2011</div></div>
<div class="row" style="top:465px"><div class="ck"></div><div class="cb" style="left:4px;top:4px"></div><div class="vs" style="left:20px"></div><div class="vs" style="left:60px"></div><div class="vs" style="left:90px"></div><div class="vs" style="left:211px"></div><div class="vs" style="left:331px"></div><div class="vs" style="left:451px"></div><div class="c" style="left:22px;width:35px;text-align:right;letter-spacing:-0.118px">13</div><svg class="a" style="left:68px;top:4px" width="15" height="16" viewBox="0 0 15 16"><rect x="0.6" y="2.7" width="13.2" height="12.7" rx="1" fill="url(#cbg)" stroke="#707064" stroke-width="1"/><path d="M4.5 0.3 H9.9 L11 3.5 H3.4 Z" fill="#3f8ff0" stroke="#234f88" stroke-width="0.5"/><rect x="5.3" y="1" width="3.8" height="1.1" fill="#8cc8ff"/><path d="M3.4 3.5 H11" stroke="#16304f" stroke-width="0.7"/><path d="M5.9 8.4 C5.9 10.2 3.6 11.6 3.6 14.2 H10.6 C10.6 11.6 8.3 10.2 8.3 8.4 Z" fill="#22a4a8" stroke="#3a34b0" stroke-width="0.8"/><ellipse cx="6" cy="12.6" rx="1.2" ry="0.9" fill="#b8f0e8" opacity="0.8"/><circle cx="7.1" cy="6.9" r="1.9" fill="#7fd0e0" stroke="#3a34b0" stroke-width="0.9"/><circle cx="6.9" cy="6.6" r="0.7" fill="#e8ffff"/></svg><div class="c" style="left:97px;letter-spacing:-0.053px">123.1.1-1</div><div class="c" style="left:217px;letter-spacing:-0.053px">123.1.1-1</div><div class="col" style="background:#fff17f"></div><div class="c" style="left:337px"></div></div>
<div class="row alt" style="top:489px"><div class="ck"></div><div class="cb" style="left:4px;top:4px"></div><div class="vs" style="left:20px"></div><div class="vs" style="left:60px"></div><div class="vs" style="left:90px"></div><div class="vs" style="left:211px"></div><div class="vs" style="left:331px"></div><div class="vs" style="left:451px"></div><div class="c" style="left:22px;width:35px;text-align:right;letter-spacing:-0.118px">14</div><svg class="a" style="left:68px;top:4px" width="15" height="16" viewBox="0 0 15 16"><rect x="0.6" y="2.7" width="13.2" height="12.7" rx="1" fill="url(#cbg)" stroke="#707064" stroke-width="1"/><path d="M4.5 0.3 H9.9 L11 3.5 H3.4 Z" fill="#3f8ff0" stroke="#234f88" stroke-width="0.5"/><rect x="5.3" y="1" width="3.8" height="1.1" fill="#8cc8ff"/><path d="M3.4 3.5 H11" stroke="#16304f" stroke-width="0.7"/><path d="M5.9 8.4 C5.9 10.2 3.6 11.6 3.6 14.2 H10.6 C10.6 11.6 8.3 10.2 8.3 8.4 Z" fill="#22a4a8" stroke="#3a34b0" stroke-width="0.8"/><ellipse cx="6" cy="12.6" rx="1.2" ry="0.9" fill="#b8f0e8" opacity="0.8"/><circle cx="7.1" cy="6.9" r="1.9" fill="#7fd0e0" stroke="#3a34b0" stroke-width="0.9"/><circle cx="6.9" cy="6.6" r="0.7" fill="#e8ffff"/></svg><div class="c" style="left:97px;letter-spacing:-0.044px">123.1-1</div><div class="c" style="left:217px;letter-spacing:-0.044px">123.1-1</div><div class="col" style="background:#fff17f"></div><div class="c" style="left:337px"></div></div>
<div class="row" style="top:513px"><div class="ck"></div><div class="cb" style="left:4px;top:4px"></div><div class="vs" style="left:20px"></div><div class="vs" style="left:60px"></div><div class="vs" style="left:90px"></div><div class="vs" style="left:211px"></div><div class="vs" style="left:331px"></div><div class="vs" style="left:451px"></div><div class="c" style="left:22px;width:35px;text-align:right;letter-spacing:-0.118px">15</div><svg class="a" style="left:68px;top:4px" width="15" height="16" viewBox="0 0 15 16"><rect x="0.6" y="2.7" width="13.2" height="12.7" rx="1" fill="url(#cbg)" stroke="#707064" stroke-width="1"/><path d="M4.5 0.3 H9.9 L11 3.5 H3.4 Z" fill="#3f8ff0" stroke="#234f88" stroke-width="0.5"/><rect x="5.3" y="1" width="3.8" height="1.1" fill="#8cc8ff"/><path d="M3.4 3.5 H11" stroke="#16304f" stroke-width="0.7"/><path d="M5.9 8.4 C5.9 10.2 3.6 11.6 3.6 14.2 H10.6 C10.6 11.6 8.3 10.2 8.3 8.4 Z" fill="#22a4a8" stroke="#3a34b0" stroke-width="0.8"/><ellipse cx="6" cy="12.6" rx="1.2" ry="0.9" fill="#b8f0e8" opacity="0.8"/><circle cx="7.1" cy="6.9" r="1.9" fill="#7fd0e0" stroke="#3a34b0" stroke-width="0.9"/><circle cx="6.9" cy="6.6" r="0.7" fill="#e8ffff"/></svg><div class="c" style="left:97px;letter-spacing:-0.044px">123.1-2</div><div class="c" style="left:217px;letter-spacing:-0.044px">123.1-2</div><div class="col" style="background:#fff17f"></div><div class="c" style="left:337px"></div></div>
<div class="row alt" style="top:537px"><div class="ck"></div><div class="cb" style="left:4px;top:4px"></div><div class="vs" style="left:20px"></div><div class="vs" style="left:60px"></div><div class="vs" style="left:90px"></div><div class="vs" style="left:211px"></div><div class="vs" style="left:331px"></div><div class="vs" style="left:451px"></div><div class="c" style="left:22px;width:35px;text-align:right;letter-spacing:-0.118px">16</div><svg class="a" style="left:68px;top:4px" width="15" height="16" viewBox="0 0 15 16"><rect x="0.6" y="2.7" width="13.2" height="12.7" rx="1" fill="url(#cbg)" stroke="#707064" stroke-width="1"/><path d="M4.5 0.3 H9.9 L11 3.5 H3.4 Z" fill="#3f8ff0" stroke="#234f88" stroke-width="0.5"/><rect x="5.3" y="1" width="3.8" height="1.1" fill="#8cc8ff"/><path d="M3.4 3.5 H11" stroke="#16304f" stroke-width="0.7"/><path d="M5.9 8.4 C5.9 10.2 3.6 11.6 3.6 14.2 H10.6 C10.6 11.6 8.3 10.2 8.3 8.4 Z" fill="#22a4a8" stroke="#3a34b0" stroke-width="0.8"/><ellipse cx="6" cy="12.6" rx="1.2" ry="0.9" fill="#b8f0e8" opacity="0.8"/><circle cx="7.1" cy="6.9" r="1.9" fill="#7fd0e0" stroke="#3a34b0" stroke-width="0.9"/><circle cx="6.9" cy="6.6" r="0.7" fill="#e8ffff"/></svg><div class="c" style="left:97px;letter-spacing:-0.044px">123.1-3</div><div class="c" style="left:217px;letter-spacing:-0.044px">123.1-3</div><div class="col" style="background:#fff17f"></div><div class="c" style="left:337px"></div></div>
<div class="row" style="top:561px"><div class="ck"></div><div class="cb" style="left:4px;top:4px"></div><div class="vs" style="left:20px"></div><div class="vs" style="left:60px"></div><div class="vs" style="left:90px"></div><div class="vs" style="left:211px"></div><div class="vs" style="left:331px"></div><div class="vs" style="left:451px"></div><div class="c" style="left:22px;width:35px;text-align:right;letter-spacing:-0.118px">17</div><svg class="a" style="left:68px;top:4px" width="15" height="16" viewBox="0 0 15 16"><rect x="0.6" y="2.7" width="13.2" height="12.7" rx="1" fill="url(#cbg)" stroke="#707064" stroke-width="1"/><path d="M4.5 0.3 H9.9 L11 3.5 H3.4 Z" fill="#3f8ff0" stroke="#234f88" stroke-width="0.5"/><rect x="5.3" y="1" width="3.8" height="1.1" fill="#8cc8ff"/><path d="M3.4 3.5 H11" stroke="#16304f" stroke-width="0.7"/><path d="M5.9 8.4 C5.9 10.2 3.6 11.6 3.6 14.2 H10.6 C10.6 11.6 8.3 10.2 8.3 8.4 Z" fill="#22a4a8" stroke="#3a34b0" stroke-width="0.8"/><ellipse cx="6" cy="12.6" rx="1.2" ry="0.9" fill="#b8f0e8" opacity="0.8"/><circle cx="7.1" cy="6.9" r="1.9" fill="#7fd0e0" stroke="#3a34b0" stroke-width="0.9"/><circle cx="6.9" cy="6.6" r="0.7" fill="#e8ffff"/></svg><div class="c" style="left:97px;letter-spacing:-0.027px">144-2</div><div class="c" style="left:217px;letter-spacing:-0.019px">Handbuch</div><div class="col" style="background:#fff17f"></div><div class="c" style="left:337px"></div></div>

<!-- scrollbar -->
<div class="a" style="left:1021px;top:180px;width:15px;height:398px;background:#fcfcfc;border-left:1px solid #4a4a4a;border-right:1px solid #4a4a4a"></div>
<div class="a" style="left:1021px;top:191px;width:15px;height:205px;background:linear-gradient(90deg,#989898 0%,#969696 50%,#888888 52%,#868686 100%);border:1px solid #444"></div>
<div class="a" style="left:1021px;top:177px;width:15px;height:15px;background:#fff;border:1px solid #3c3c3c;border-radius:3px 3px 0 0"></div>
<svg class="a" style="left:1025px;top:183px" width="7" height="4" viewBox="0 0 7 4"><path d="M0 4 L3.5 0 L7 4 Z" fill="#3a3a3a"/></svg>
<div class="a" style="left:1021px;top:567px;width:15px;height:15px;background:#fff;border:1px solid #3c3c3c;border-radius:0 0 3px 3px"></div>
<svg class="a" style="left:1025px;top:573px" width="7" height="4" viewBox="0 0 7 4"><path d="M0 0 L3.5 4 L7 0 Z" fill="#111"/></svg>
<svg class="a" style="left:1025px;top:290px" width="7" height="8" viewBox="0 0 7 8"><path d="M0 1 H7 M0 4 H7 M0 7 H7" stroke="#4a4a4a" stroke-width="1"/></svg>
<!-- bottom border -->
<div class="a" style="left:33px;top:152px;width:1px;height:431px;background:#99bbe8"></div>
<div class="a" style="left:1036px;top:152px;width:1px;height:431px;background:#99bbe8"></div>
<div class="a" style="left:29px;top:582px;width:1011px;height:1px;background:#99bbe8"></div>
</body></html>
